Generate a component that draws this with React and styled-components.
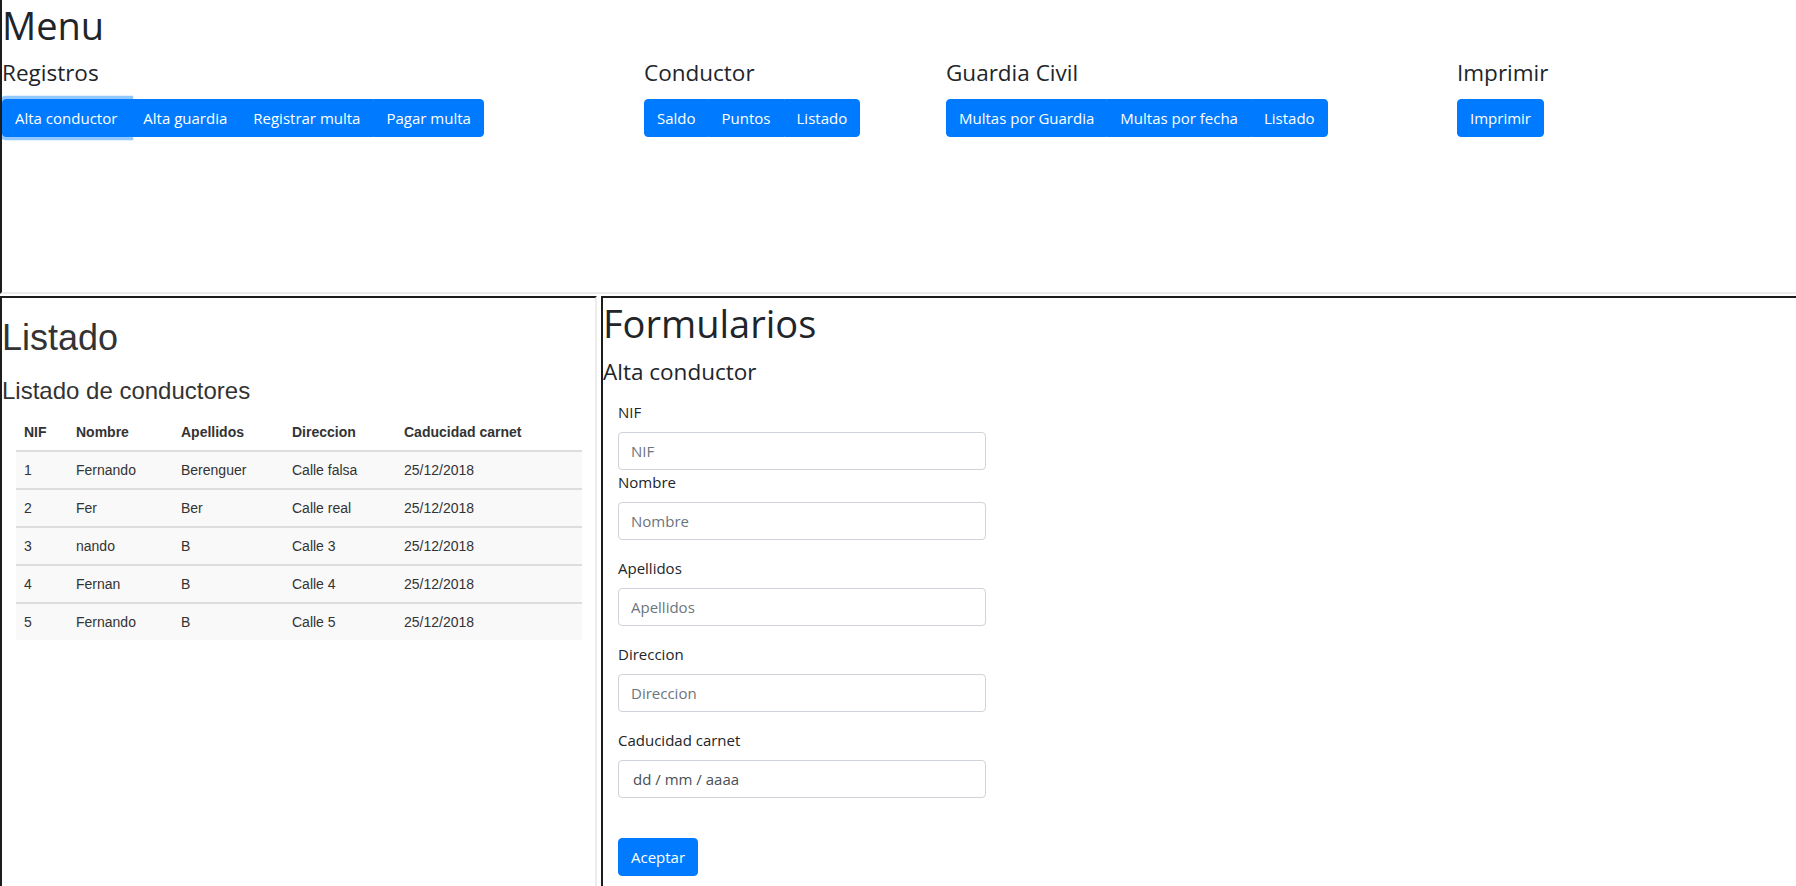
import React from 'react'
import styled, { createGlobalStyle } from 'styled-components'

const GlobalStyle = createGlobalStyle`
  html, body {
    margin: 0;
    padding: 0;
    background: #fff;
    overflow: hidden;
  }
  * {
    box-sizing: border-box;
  }
`

const bs4Font = `'Open Sans', 'Noto Sans', sans-serif`
const bs3Font = `'Liberation Sans', Arial, sans-serif`

const Page = styled.div`
  width: 1796px;
  height: 886px;
  display: flex;
  flex-direction: column;
  overflow: hidden;
`

const TopFrame = styled.section`
  flex: none;
  height: 294px;
  border-left: 2px solid #1c1c1c;
  border-bottom: 2px solid #ececec;
  overflow: hidden;
  font-family: ${bs4Font};
  color: #212529;
`

const BottomRow = styled.div`
  flex: 1;
  display: flex;
  gap: 4px;
  margin-top: 2px;
  min-height: 0;
`

const Frame = styled.section`
  border-top: 2px solid #1c1c1c;
  border-left: 2px solid #1c1c1c;
  border-right: ${props => props.$last ? 'none' : '2px solid #ececec'};
  overflow: hidden;
  ${props => props.$width ? `width: ${props.$width}px; flex: none;` : 'flex: 1;'}
  font-family: ${props => props.$legacy ? bs3Font : bs4Font};
  color: ${props => props.$legacy ? '#333' : '#212529'};
`

const Title = styled.h1`
  margin: 0 0 6px;
  font-size: 38px;
  line-height: 50px;
  font-weight: 400;
`

const MenuGrid = styled.div`
  display: grid;
  grid-template-columns: 642px 302px 511px 1fr;
`

const SectionTitle = styled.h4`
  margin: 3px 0 11px;
  font-size: 22.5px;
  line-height: 28.8px;
  font-weight: 400;
`

const BtnGroup = styled.div`
  display: inline-flex;
  vertical-align: top;
`

const Button = styled.button`
  font-family: ${bs4Font};
  font-size: 15px;
  line-height: 24px;
  color: #fff;
  background: #007bff;
  border: 1px solid #007bff;
  padding: 6px 12px;
  margin: 0;
  border-radius: 0;
  cursor: pointer;
  white-space: nowrap;
  box-shadow: ${props => props.$focused ? '0 0 0 3.2px rgba(38, 143, 255, 0.5)' : 'none'};

  &:first-child {
    border-top-left-radius: 4px;
    border-bottom-left-radius: 4px;
  }
  &:last-child {
    border-top-right-radius: 4px;
    border-bottom-right-radius: 4px;
  }
`

const ListTitle = styled.h1`
  margin: 20px 0 10px;
  font-size: 36px;
  line-height: 39.6px;
  font-weight: 400;
`

const ListSubtitle = styled.h3`
  margin: 20px 0 10px;
  font-size: 24px;
  line-height: 26.4px;
  font-weight: 400;
`

const TableWrap = styled.div`
  padding-left: 14px;
`

const Table = styled.table`
  width: 566px;
  border-collapse: collapse;
  font-size: 14px;
  line-height: 20px;
`

const Th = styled.th`
  text-align: left;
  font-weight: 700;
  padding: 8px;
  border-bottom: 2px solid #ddd;
  width: ${props => props.$w ? `${props.$w}px` : 'auto'};
`

const Row = styled.tr`
  background: #f9f9f9;
`

const Td = styled.td`
  padding: 8px;
  border-top: 2px solid #ddd;
`

const FormTitle = styled.h4`
  margin: 10px 0 0;
  font-size: 22.5px;
  line-height: 28.8px;
  font-weight: 400;
`

const Form = styled.form`
  padding: 13px 0 0 15px;
`

const Field = styled.div`
  margin-bottom: ${props => props.$tight ? 0 : 16}px;
`

const Label = styled.label`
  display: block;
  margin-bottom: 8px;
  font-size: 15px;
  line-height: 24px;
`

const Input = styled.input`
  display: block;
  width: 368px;
  height: 38px;
  padding: 6px 12px 6px ${props => props.$date ? 14 : 12}px;
  font-family: ${bs4Font};
  font-size: 15px;
  line-height: 24px;
  color: #495057;
  background: #fff;
  border: 1px solid #ced4da;
  border-radius: 4px;
  outline: none;

  &::placeholder {
    color: #6c757d;
    opacity: 1;
  }
`

const Submit = styled(Button)`
  margin-top: 24px;
  border-radius: 4px;
`

const menu = [
  { title: 'Registros', items: ['Alta conductor', 'Alta guardia', 'Registrar multa', 'Pagar multa'] },
  { title: 'Conductor', items: ['Saldo', 'Puntos', 'Listado'] },
  { title: 'Guardia Civil', items: ['Multas por Guardia', 'Multas por fecha', 'Listado'] },
  { title: 'Imprimir', items: ['Imprimir'] }
]

const drivers = [
  ['1', 'Fernando', 'Berenguer', 'Calle falsa', '25/12/2018'],
  ['2', 'Fer', 'Ber', 'Calle real', '25/12/2018'],
  ['3', 'nando', 'B', 'Calle 3', '25/12/2018'],
  ['4', 'Fernan', 'B', 'Calle 4', '25/12/2018'],
  ['5', 'Fernando', 'B', 'Calle 5', '25/12/2018']
]

const columns = [
  { label: 'NIF', w: 52 },
  { label: 'Nombre', w: 105 },
  { label: 'Apellidos', w: 111 },
  { label: 'Direccion', w: 112 },
  { label: 'Caducidad carnet' }
]

const fields = ['NIF', 'Nombre', 'Apellidos', 'Direccion']

export default function App () {
  return (
    <Page>
      <GlobalStyle />
      <TopFrame>
        <Title>Menu</Title>
        <MenuGrid>
          {menu.map((section, i) => (
            <div key={section.title}>
              <SectionTitle>{section.title}</SectionTitle>
              <BtnGroup>
                {section.items.map((item, j) => (
                  <Button key={item} type='button' $focused={i === 0 && j === 0}>{item}</Button>
                ))}
              </BtnGroup>
            </div>
          ))}
        </MenuGrid>
      </TopFrame>

      <BottomRow>
        <Frame $width={597} $legacy>
          <ListTitle>Listado</ListTitle>
          <ListSubtitle>Listado de conductores</ListSubtitle>
          <TableWrap>
            <Table>
              <thead>
                <tr>
                  {columns.map(col => <Th key={col.label} $w={col.w}>{col.label}</Th>)}
                </tr>
              </thead>
              <tbody>
                {drivers.map(row => (
                  <Row key={row[0]}>
                    {row.map((cell, k) => <Td key={k}>{cell}</Td>)}
                  </Row>
                ))}
              </tbody>
            </Table>
          </TableWrap>
        </Frame>

        <Frame $last>
          <Title>Formularios</Title>
          <FormTitle>Alta conductor</FormTitle>
          <Form onSubmit={e => e.preventDefault()}>
            {fields.map((name, i) => (
              <Field key={name} $tight={i === 0}>
                <Label>{name}</Label>
                <Input type='text' placeholder={name} />
              </Field>
            ))}
            <Field>
              <Label>Caducidad carnet</Label>
              <Input type='text' $date readOnly defaultValue='dd / mm / aaaa' />
            </Field>
            <Submit type='submit'>Aceptar</Submit>
          </Form>
        </Frame>
      </BottomRow>
    </Page>
  )
}
